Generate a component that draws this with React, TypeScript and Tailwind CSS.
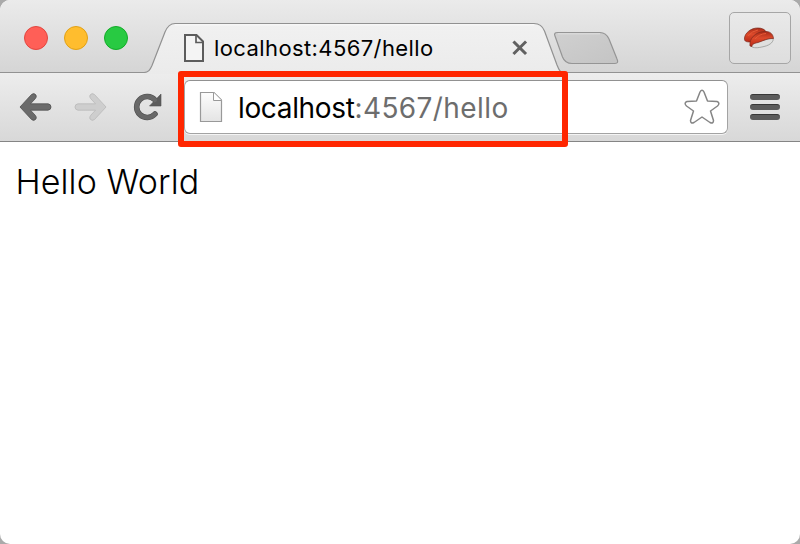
import React from "react";

function TrafficLights() {
  return (
    <div className="flex gap-4 pl-6 pt-[26px]">
      <span className="size-6 rounded-full border border-[#e2463f] bg-[#ff5f57]" />
      <span className="size-6 rounded-full border border-[#e1a116] bg-[#ffbd2e]" />
      <span className="size-6 rounded-full border border-[#12ac28] bg-[#28ca42]" />
    </div>
  );
}

function Tab() {
  return (
    <div className="relative ml-4 h-[74px] w-[420px] shrink-0">
      <svg className="absolute inset-0" width="420" height="74" viewBox="0 0 420 74">
        <defs>
          <linearGradient id="tabFill" x1="0" y1="0" x2="0" y2="1">
            <stop offset="0" stopColor="#f1f1f1" />
            <stop offset="1" stopColor="#ebebeb" />
          </linearGradient>
        </defs>
        <path
          d="M0 74V72.500C4.500 72.500 6 70 8 65.500L21 32C23.500 26 26 23.500 31 23.500H390C395 23.500 398.500 26 400.500 31L413 65C415 70 416 72.500 420 72.500V74Z"
          fill="url(#tabFill)"
        />
        <path
          d="M0 72.500C4.500 72.500 6 70 8 65.500L21 32C23.500 26 26 23.500 31 23.500H390C395 23.500 398.500 26 400.500 31L413 65C415 70 416 72.500 420 72.500"
          fill="none"
          stroke="#919191"
          strokeWidth="1.2"
        />
        <path d="M31 24.800H390" stroke="#fafafa" />
      </svg>
      <div className="relative flex h-full items-center pl-10 pt-[22px]">
        <svg width="22" height="30" viewBox="0 0 22 30">
          <path d="M1 2H12.500L19 8.500V28H1Z" fill="#f4f4f4" stroke="#5c5c5c" strokeWidth="2" />
          <path d="M12 2V9.500H20" fill="none" stroke="#5c5c5c" strokeWidth="1.700" />
        </svg>
        <span className="ml-2 w-[220px] whitespace-nowrap pb-px font-[Inter,sans-serif] text-[22px] leading-[30px] tracking-[0.4px] text-black">
          localhost:4567/hello
        </span>
        <svg className="ml-[78px]" width="16" height="16" viewBox="0 0 16 16">
          <path d="M2.500 2.500L13 13M13 2.500L2.500 13" stroke="#616161" strokeWidth="3" strokeLinecap="square" />
        </svg>
      </div>
    </div>
  );
}

function Sushi() {
  return (
    <svg className="-ml-0.5" width="32" height="24" viewBox="0 0 32 24">
      <defs>
        <linearGradient id="fish" x1="0" y1="0" x2="0" y2="1">
          <stop offset="0" stopColor="#a82b18" />
          <stop offset=".45" stopColor="#dd4a2b" />
          <stop offset="1" stopColor="#b92a18" />
        </linearGradient>
      </defs>
      <path d="M8 18C14 16 24 13 30 12C31 15 28 19 21 20.500C15 22 10 22.500 8 20Z" fill="#dfe0df" stroke="#8d8f8d" strokeWidth=".7" />
      <path d="M1.500 12C2 7 8 1.800 15 2C19 2 22 3.500 23 6L9 16C4 16 1 16 1.500 12Z" fill="url(#fish)" stroke="#7c2a1c" strokeWidth=".7" />
      <path d="M7 20C6 13 12 6 21 5.500C26 5 30 7 30.500 12.500C24 12 20 15 15 16.500C11 17.500 9 18 9 20.500Z" fill="url(#fish)" stroke="#7c2a1c" strokeWidth=".7" />
      <path d="M5 10Q9 5 15 4M12 13Q16 8 23 7.500" stroke="#e65a36" strokeWidth="1" fill="none" />
    </svg>
  );
}

function TabStrip() {
  return (
    <header className="flex h-[73px] border-b border-[#929292] bg-linear-to-b from-[#ebebeb] to-[#d5d5d5]">
      <TrafficLights />
      <Tab />
      <svg className="-ml-3 mt-[31px] shrink-0" width="68" height="34" viewBox="0 0 68 34">
        <defs>
          <linearGradient id="newTab" x1="0" y1="0" x2="1" y2="1">
            <stop offset="0" stopColor="#d0d0d0" />
            <stop offset="1" stopColor="#c4c4c4" />
          </linearGradient>
        </defs>
        <path
          d="M5.500 1.500H48Q54 1.500 57 8L65 28Q67 32.500 63 32.500H20Q13 32.500 10.500 26L3 5Q1.500 1.500 5.500 1.500Z"
          fill="url(#newTab)"
          stroke="#959595"
          strokeWidth="1.200"
        />
        <path d="M6 2.800H48" stroke="#dfdfdf" />
      </svg>
      <button className="ml-auto mr-[9px] mt-3 flex h-[52px] w-[62px] items-center justify-center rounded-[5px] border border-[#a6a6a6] bg-linear-to-b from-[#e9e9e9] to-[#dedede]">
        <Sushi />
      </button>
    </header>
  );
}

function Arrow({ className, color, edge }: { className: string; color: string; edge: string }) {
  return (
    <svg className={className} width="34" height="30" viewBox="0 0 34 30">
      <path
        d="M2 15L13.500 2.500Q16 .5 18 3Q19 5 17 7L12.500 11.800H30Q33 12.200 33 15Q33 17.800 30 18.200H12.500L17 23Q19 25 18 27Q16 29.500 13.500 27.500Z"
        fill={color}
        stroke={edge}
        strokeWidth=".8"
        strokeLinejoin="round"
      />
    </svg>
  );
}

function AddressBar() {
  return (
    <div className="ml-[18px] flex h-[54px] w-[544px] items-center rounded-[6px] border border-[#a3a3a3] border-t-[#919191] bg-white pl-[14px] shadow-[0_1px_0_#f4f4f4]">
      <svg width="26" height="34" viewBox="0 0 26 34">
        <defs>
          <linearGradient id="page" x1="0" y1="0" x2="0" y2="1">
            <stop offset="0" stopColor="#fdfdfd" />
            <stop offset="1" stopColor="#e4e4e4" />
          </linearGradient>
        </defs>
        <path d="M1.500 2.500H15L22.500 10V31.500H1.500Z" fill="url(#page)" stroke="#999" strokeWidth="1.200" />
        <path d="M14.500 2.500V10.500H22.500" fill="#fff" stroke="#999" />
      </svg>
      <span className="ml-[13px] whitespace-nowrap pt-0.5 font-[Inter,sans-serif] text-[28px] leading-9 tracking-[0.4px] text-[#6d6d6d]">
        <span className="tracking-[-0.35px] text-black">localhost</span>:4567/hello
      </span>
      <svg className="ml-auto mr-[7px]" width="36" height="36" viewBox="0 0 36 36">
        <path
          d="M16 3Q18 -.5 20 3L23.500 12L33 12.500Q36.500 14 33.500 17L26.500 22L29.500 31.500Q29.500 35 26 33.500L18 28L10 33.500Q6.500 35 6.500 31.500L9.500 22L2.500 17Q-.5 14 3 12.500L12.500 12Z"
          fill="white"
          stroke="#858585"
          strokeWidth="1.500"
          strokeLinejoin="round"
        />
      </svg>
    </div>
  );
}

function Toolbar() {
  return (
    <nav className="flex h-[69px] items-center border-b border-[#858585] bg-linear-to-b from-[#ededed] to-[#d8d8d8]">
      <Arrow className="ml-[18px]" color="#6b6b6b" edge="#505050" />
      <Arrow className="ml-[22px] -scale-x-100" color="#cecece" edge="#b9b9b9" />
      <svg className="ml-6" width="34" height="32" viewBox="0 0 34 32">
        <path d="M23 23A10.500 10.500 0 1 1 23 9" fill="none" stroke="#505050" strokeWidth="5.600" strokeLinecap="round" />
        <path d="M29 3V15H17.500Z" fill="#5c5c5c" stroke="#505050" strokeWidth=".6" />
        <path d="M23 23A10.500 10.500 0 1 1 23 9" fill="none" stroke="#686868" strokeWidth="4.300" strokeLinecap="round" />
      </svg>
      <AddressBar />
      <div className="ml-[22px] flex flex-col gap-1">
        <span className="h-1.5 w-[30px] rounded-full border-t border-[#383838] bg-[#5c5c5c]" />
        <span className="h-1.5 w-[30px] rounded-full border-t border-[#383838] bg-[#5c5c5c]" />
        <span className="h-1.5 w-[30px] rounded-full border-t border-[#383838] bg-[#5c5c5c]" />
      </div>
    </nav>
  );
}

export default function App() {
  return (
    <div className="h-[544px] w-[800px] bg-[#aaaaaa]">
      <div className="relative h-full overflow-hidden rounded-[10px] bg-white">
        <TabStrip />
        <Toolbar />
        <main className="px-[15.500px] pt-4 font-[Inter,sans-serif] text-[34px] font-light leading-[48px] tracking-[0.1px] text-black">
          Hello World
        </main>
        <div className="absolute left-[178px] top-[71px] h-[76px] w-[390px] rounded-[3px] border-6 border-[#ff2600]" />
      </div>
    </div>
  );
}
